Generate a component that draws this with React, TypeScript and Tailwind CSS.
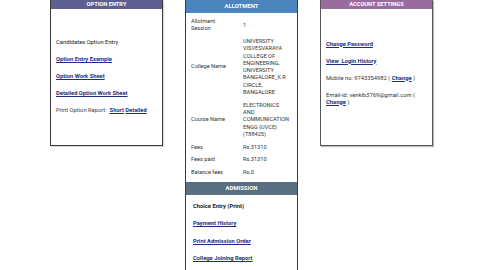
import React from "react";

const font = { fontFamily: "Roboto, 'Liberation Sans', sans-serif" };

function Link({ children }: { children: React.ReactNode }) {
  return <span className="font-bold text-[#1c2f82] underline">{children}</span>;
}

function Row({ label, lines }: { label: React.ReactNode; lines: string[] }) {
  return (
    <div className="flex items-center py-[2.7px]">
      <div className="w-[52px] shrink-0 text-[#333]">{label}</div>
      <div className="text-[#333]">
        {lines.map((l, i) => (
          <div key={i}>{l}</div>
        ))}
      </div>
    </div>
  );
}

export default function App() {
  return (
    <div className="h-[270px] w-[480px] overflow-hidden bg-white" style={font}>
      <div className="flex items-start gap-[22px] pl-[50px]">
        {/* Option Entry */}
        <div className="flex h-[146px] w-[113px] flex-col border border-t-0 border-[#3c3c3c] shadow-[1px_1px_1px_rgba(0,0,0,0.15)]">
          <div className="flex h-[9px] items-center justify-center bg-[#5c5f8f] text-[5.7px] font-bold text-white">
            OPTION ENTRY
          </div>
          <div className="flex flex-col gap-[10px] pl-[5px] pt-[30px] text-[5.8px] leading-[7px] text-[#1a1a1a]">
            <div>Candidates Option Entry</div>
            <div><Link>Option Entry Example</Link></div>
            <div><Link>Option Work Sheet</Link></div>
            <div><Link>Detailed Option Work Sheet</Link></div>
            <div className="text-[#444]">
              Print Option Report:&nbsp; <Link>Short</Link> <Link>Detailed</Link>
            </div>
          </div>
        </div>

        {/* Allotment + Admission */}
        <div className="flex h-[270px] w-[113px] flex-col border border-t-0 border-b-0 border-[#3c3c3c]">
          <div className="flex h-[13px] items-center justify-center bg-[#4b85bf] text-[5.9px] font-bold text-white">
            ALLOTMENT
          </div>
          <div className="pl-[5px] pt-[2.3px] pb-[3px] text-[5.6px] leading-[7.3px]">
            <Row label={<>Allotment<br />Session</>} lines={["1"]} />
            <Row
              label="College Name"
              lines={[
                "UNIVERSITY",
                "VISVESVARAYA",
                "COLLEGE OF",
                "ENGINEERING,",
                "UNIVERSITY",
                "BANGALORE_K R",
                "CIRCLE,",
                "BANGALORE",
              ]}
            />
            <Row
              label="Course Name"
              lines={["ELECTRONICS", "AND", "COMMUNICATION", "ENGG (UVCE)", "(T88425)"]}
            />
            <Row label="Fees" lines={["Rs.31310"]} />
            <Row label="Fees paid" lines={["Rs.31310"]} />
            <Row label="Balance fees" lines={["Rs.0"]} />
          </div>
          <div className="flex h-[13px] items-center justify-center bg-[#5a6f82] text-[5.9px] font-bold text-white">
            ADMISSION
          </div>
          <div className="flex flex-col gap-[10.5px] pl-[7px] pt-[8px] text-[5.8px] leading-[7px]">
            <div className="font-bold text-[#1a1a1a]">Choice Entry (Print)</div>
            <div><Link>Payment History</Link></div>
            <div><Link>Print Admission Order</Link></div>
            <div><Link>College Joining Report</Link></div>
          </div>
        </div>

        {/* Account Settings */}
        <div className="flex h-[146px] w-[113px] flex-col border border-t-0 border-[#555] shadow-[1px_1px_1px_rgba(0,0,0,0.25)]">
          <div className="flex h-[9px] items-center justify-center bg-[#9a6b9e] text-[5.7px] font-bold text-white">
            ACCOUNT SETTINGS
          </div>
          <div className="flex flex-col gap-[10px] pl-[5px] pt-[31.5px] text-[5.8px] leading-[7px] text-[#333]">
            <div><Link>Change Password</Link></div>
            <div><Link>View&nbsp; Login History</Link></div>
            <div>
              Mobile no: 9743354982 ( <Link>Change</Link> )
            </div>
            <div>
              Email-id: venkib3769@gmail.com (
              <br />
              <Link>Change</Link> )
            </div>
          </div>
        </div>
      </div>
    </div>
  );
}
